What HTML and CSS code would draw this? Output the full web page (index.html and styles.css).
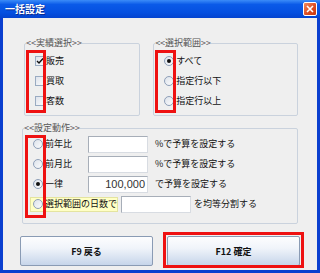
FILE: index.html
```html
<!DOCTYPE html>
<html lang="ja">
<head>
    <meta charset="UTF-8">
    <title>一括設定</title>
    <link rel="stylesheet" href="styles.css">
</head>
<body>

    <div class="window">
        <div class="titlebar">
            <span class="title">一括設定</span>
            <span class="close">
                <svg width="8" height="8" viewBox="0 0 8 8"><path d="M1 1L7 7M7 1L1 7" stroke="#fff" stroke-width="1.6"/></svg>
            </span>
        </div>

        <div class="client">
            <div class="top-row">
                <fieldset class="group group-result">
                    <legend>&lt;&lt;実績選択&gt;&gt;</legend>
                    <div class="opt"><span class="check"><svg width="8" height="8" viewBox="0 0 8 8"><path d="M1 4L3 6L7 1.5" stroke="#111" stroke-width="1.4" fill="none"/></svg></span>販売</div>
                    <div class="opt"><span class="check"></span>買取</div>
                    <div class="opt"><span class="check"></span>客数</div>
                </fieldset>

                <fieldset class="group group-range">
                    <legend>&lt;&lt;選択範囲&gt;&gt;</legend>
                    <div class="opt"><span class="radio on"></span>すべて</div>
                    <div class="opt"><span class="radio"></span>指定行以下</div>
                    <div class="opt"><span class="radio"></span>指定行以上</div>
                </fieldset>
            </div>

            <fieldset class="group group-action">
                <legend>&lt;&lt;設定動作&gt;&gt;</legend>
                <div class="action-row">
                    <div class="opt opt-fixed"><span class="radio"></span>前年比</div>
                    <span class="field"></span>
                    <span class="note">%で予算を設定する</span>
                </div>
                <div class="action-row">
                    <div class="opt opt-fixed"><span class="radio"></span>前月比</div>
                    <span class="field"></span>
                    <span class="note">%で予算を設定する</span>
                </div>
                <div class="action-row">
                    <div class="opt opt-fixed"><span class="radio on"></span>一律</div>
                    <span class="field field-value">100,000</span>
                    <span class="note">で予算を設定する</span>
                </div>
                <div class="action-row">
                    <div class="opt opt-days"><span class="radio"></span>選択範囲の日数で</div>
                    <span class="field field-days"></span>
                    <span class="note note-days">を均等分割する</span>
                </div>
            </fieldset>

            <div class="buttons">
                <button class="btn">F9 戻る</button>
                <button class="btn">F12 確定</button>
            </div>
        </div>

        <!-- red annotation frames -->
        <span class="mark mark-result"></span>
        <span class="mark mark-range"></span>
        <span class="mark mark-action"></span>
        <span class="mark mark-ok"></span>
    </div>

</body>
</html>
```

FILE: styles.css
```css
html, body {
    margin: 0;
    padding: 0;
}
body {
    font-family: "Noto Sans CJK JP", "Noto Sans", sans-serif;
    font-size: 9px;
    color: #111;
}
.window {
    position: relative;
    width: 320px;
    height: 273px;
    box-sizing: border-box;
    background: #0b3fcf;
    padding: 0 3px 3px 3px;
    display: flex;
    flex-direction: column;
}
.titlebar {
    height: 18px;
    margin: 0 -3px;
    padding: 0 3px 0 5px;
    display: flex;
    align-items: center;
    justify-content: space-between;
    background: linear-gradient(#3b8cf8, #0a5ae8 25%, #0550e0 70%, #0444cf);
}
.title {
    color: #fff;
    font-size: 10px;
    font-weight: bold;
    line-height: 12px;
    text-shadow: 1px 1px 0 #0a2a90;
}
.close {
    width: 14px;
    height: 14px;
    box-sizing: border-box;
    border: 1px solid #fff;
    border-radius: 2px;
    background: linear-gradient(135deg, #f08a60, #dc4a1e 60%, #c8380e);
    display: flex;
    align-items: center;
    justify-content: center;
}
.client {
    flex: 1;
    background: #efefef;
    padding: 0 19px;
    display: flex;
    flex-direction: column;
}
.top-row {
    display: flex;
    gap: 13px;
    margin-top: 19px;
    padding-left: 2px;
}
.group {
    margin: 0;
    padding: 0 0 0 10px;
    border: 1px solid #cad2dd;
    border-radius: 2px;
    box-sizing: border-box;
}
.group legend {
    padding: 0;
    margin-left: -9px;
    color: #555;
    line-height: 12px;
}
.group-result {
    width: 117px;
    height: 79px;
    padding-top: 2px;
}
.group-range {
    width: 146px;
    height: 79px;
    padding-top: 2px;
}
.group-action {
    margin-top: 6px;
    height: 102px;
    padding-top: 0;
}
.opt {
    height: 20px;
    display: flex;
    align-items: center;
    line-height: 12px;
}
.check {
    width: 10px;
    height: 10px;
    box-sizing: border-box;
    border: 1px solid #9aabc2;
    background: linear-gradient(135deg, #dfe3ec, #fafbfd);
    margin-right: 1px;
    display: flex;
    align-items: center;
    justify-content: center;
}
.radio {
    width: 10px;
    height: 10px;
    box-sizing: border-box;
    border: 1px solid #8e9fb8;
    border-radius: 50%;
    background: linear-gradient(135deg, #dde2ea, #fbfcfd);
    margin-right: 2px;
    display: flex;
    align-items: center;
    justify-content: center;
}
.radio.on::after {
    content: "";
    width: 4px;
    height: 4px;
    border-radius: 50%;
    background: #111;
}
.action-row {
    height: 20px;
    display: flex;
    align-items: center;
}
.opt-fixed {
    width: 55px;
}
.opt-days {
    width: 88px;
    height: 15px;
    box-sizing: border-box;
    margin-left: -3px;
    padding-left: 2px;
    background: #ffffc4;
    border: 1px solid #e4e4a0;
}
.field {
    width: 60px;
    height: 17px;
    box-sizing: border-box;
    background: #fff;
    border: 1px solid #a7aeb8;
    border-right-color: #d8dce2;
    border-bottom-color: #d8dce2;
}
.field-value {
    font-family: "Liberation Sans", sans-serif;
    font-size: 11px;
    line-height: 15px;
    text-align: right;
    padding-right: 2px;
    color: #333;
}
.field-days {
    width: 70px;
    margin-left: 3px;
}
.note {
    margin-left: 7px;
    line-height: 12px;
}
.note-days {
    margin-left: 3px;
}
.buttons {
    display: flex;
    gap: 14px;
    margin: 12px -2px 0 -2px;
}
.btn {
    width: 133px;
    height: 30px;
    border: 1px solid #8a9bb4;
    border-radius: 2px;
    background: linear-gradient(#fdfdfe, #f0f4fa 40%, #c6d5ea);
    font-family: "Noto Sans CJK JP", "Noto Sans", sans-serif;
    font-size: 9px;
    font-weight: bold;
    color: #111;
    padding: 0;
}
.mark {
    position: absolute;
    box-sizing: border-box;
    border: 3px solid #ee1111;
}
.mark-result {
    left: 26px;
    top: 50px;
    width: 20px;
    height: 63px;
}
.mark-range {
    left: 155px;
    top: 50px;
    width: 21px;
    height: 63px;
}
.mark-action {
    left: 25px;
    top: 135px;
    width: 21px;
    height: 83px;
}
.mark-ok {
    left: 163px;
    top: 232px;
    width: 141px;
    height: 36px;
}
```
